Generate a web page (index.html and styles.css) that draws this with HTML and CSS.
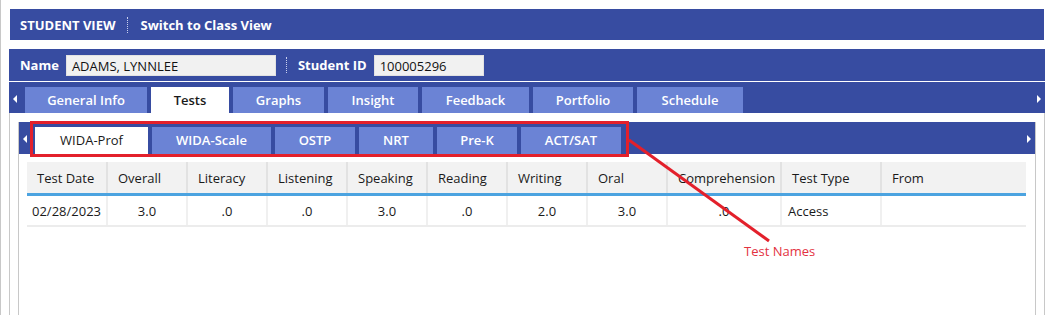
FILE: index.html
```html
<!DOCTYPE html>
<html lang="en">
<head>
  <meta charset="UTF-8">
  <title>Student View - Tests</title>
  <link rel="stylesheet" href="styles.css">
</head>
<body>
  <div class="page">
    <div class="view-bar">
      <span class="view-title">STUDENT VIEW</span>
      <span class="sep wide"></span>
      <a class="view-link">Switch to Class View</a>
    </div>

    <div class="student">
      <div class="id-bar">
        <label>Name</label>
        <div class="field name-field">ADAMS, LYNNLEE</div>
        <span class="sep"></span>
        <label>Student ID</label>
        <div class="field id-field">100005296</div>
      </div>

      <div class="tab-bar main-tabs">
        <span class="arrow left"></span>
        <div class="tabs">
          <div class="tab" style="width:122px">General Info</div>
          <div class="tab active" style="width:78px">Tests</div>
          <div class="tab" style="width:91px">Graphs</div>
          <div class="tab" style="width:90px">Insight</div>
          <div class="tab" style="width:107px">Feedback</div>
          <div class="tab" style="width:100px">Portfolio</div>
          <div class="tab" style="width:106px">Schedule</div>
        </div>
        <span class="arrow right"></span>
      </div>

      <div class="content">
        <div class="panel">
          <div class="tab-bar sub-tabs">
            <span class="arrow left"></span>
            <div class="tabs">
              <div class="tab active" style="width:113px">WIDA-Prof</div>
              <div class="tab" style="width:119px">WIDA-Scale</div>
              <div class="tab" style="width:80px">OSTP</div>
              <div class="tab" style="width:74px">NRT</div>
              <div class="tab" style="width:80px">Pre-K</div>
              <div class="tab" style="width:100px">ACT/SAT</div>
            </div>
            <span class="arrow right"></span>
          </div>

          <table class="scores">
            <colgroup>
              <col style="width:80px">
              <col style="width:80px">
              <col style="width:80px">
              <col style="width:80px">
              <col style="width:80px">
              <col style="width:80px">
              <col style="width:80px">
              <col style="width:80px">
              <col style="width:114px">
              <col style="width:100px">
              <col>
            </colgroup>
            <thead>
              <tr>
                <th>Test Date</th>
                <th>Overall</th>
                <th>Literacy</th>
                <th>Listening</th>
                <th>Speaking</th>
                <th>Reading</th>
                <th>Writing</th>
                <th>Oral</th>
                <th>Comprehension</th>
                <th>Test Type</th>
                <th>From</th>
              </tr>
            </thead>
            <tbody>
              <tr>
                <td class="num">02/28/2023</td>
                <td class="num">3.0</td>
                <td class="num">.0</td>
                <td class="num">.0</td>
                <td class="num">3.0</td>
                <td class="num">.0</td>
                <td class="num">2.0</td>
                <td class="num">3.0</td>
                <td class="num">.0</td>
                <td class="type">Access</td>
                <td></td>
              </tr>
            </tbody>
          </table>
        </div>
      </div>
    </div>

    <!-- annotation drawn over the screenshot -->
    <div class="callout-box"></div>
    <svg class="callout-line" width="1052" height="315" viewBox="0 0 1052 315">
      <line x1="628" y1="140" x2="768" y2="241" stroke="#e3202b" stroke-width="3"/>
    </svg>
    <div class="callout-label">Test Names</div>
  </div>
</body>
</html>
```

FILE: styles.css
```css
body {
  margin: 0;
  font-family: 'Open Sans', 'Noto Sans', sans-serif;
  font-size: 13px;
  color: #1a1a1a;
  background: #fff;
}
.page {
  position: relative;
  height: 315px;
  border-left: 1px solid #c8c8c8;
  padding: 9px 7px 0 8px;
  box-sizing: border-box;
  overflow: hidden;
}
.view-bar {
  margin: 0 1px;
  height: 31px;
  background: #374ca1;
  color: #fff;
  font-weight: 700;
  display: flex;
  align-items: center;
  padding-left: 10px;
}
.sep {
  width: 0;
  height: 16px;
  border-left: 1px dotted #c9d0ee;
  margin: 0 11px 0 10px;
}
.sep.wide {
  margin: 0 13px 0 11px;
}
.view-link {
  color: #fff;
  cursor: pointer;
}
.student {
  margin-top: 9px;
}
.id-bar {
  height: 32px;
  background: #374ca1;
  border-bottom: 1px solid #fff;
  display: flex;
  align-items: center;
  padding-left: 11px;
  color: #fff;
  font-weight: 700;
}
.id-bar label {
  margin-right: 7px;
}
.field {
  height: 21px;
  line-height: 21px;
  background: #f1f1f1;
  border: 1px solid #e2e2e2;
  box-sizing: border-box;
  color: #111;
  font-weight: 400;
  padding-left: 5px;
}
.name-field {
  width: 210px;
}
.id-field {
  width: 110px;
}
.tab-bar {
  background: #374ca1;
  display: flex;
  align-items: flex-end;
  position: relative;
}
.main-tabs {
  height: 31px;
}
.sub-tabs {
  height: 32px;
}
.tabs {
  display: flex;
  gap: 4px;
  margin-left: 16px;
  flex: 1;
}
.tab {
  height: 26px;
  line-height: 26px;
  background: #6b83d5;
  color: #fff;
  font-weight: 600;
  text-align: center;
}
.sub-tabs .tab {
  height: 27px;
  line-height: 26px;
}
.tab.active {
  background: #fff;
  color: #1a1a1a;
}
.sub-tabs .tab.active {
  font-weight: 500;
}
.arrow {
  position: absolute;
  top: 50%;
  margin-top: -3px;
  width: 0;
  height: 0;
  border-top: 4px solid transparent;
  border-bottom: 4px solid transparent;
}
.arrow.left {
  left: 4px;
  border-right: 4px solid #fff;
}
.arrow.right {
  right: 4px;
  border-left: 4px solid #fff;
}
.content {
  border-left: 1px solid #c8c8c8;
  border-right: 1px solid #c8c8c8;
  padding: 9px 8px 0 8px;
  height: 220px;
}
.panel {
  border-left: 1px solid #c8c8c8;
  border-right: 1px solid #c8c8c8;
  height: 100%;
}
.scores {
  margin: 8px 8px 0 8px;
  width: 999px;
  border-collapse: collapse;
  table-layout: fixed;
}
.scores th {
  height: 31px;
  background: #f2f2f2;
  font-weight: 500;
  text-align: left;
  padding: 0 0 0 10px;
  border-left: 2px solid #e2e2e2;
  border-bottom: 3px solid #4ba3e0;
  white-space: nowrap;
  overflow: hidden;
}
.scores th:first-child {
  border-left: none;
}
.scores td {
  height: 29px;
  border-left: 2px solid #f0f0f0;
  border-bottom: 2px solid #ececec;
  padding: 0;
}
.scores td:first-child {
  border-left: none;
}
.scores td.num {
  text-align: center;
}
.scores td.type {
  padding-left: 6px;
}
.callout-box {
  position: absolute;
  left: 29px;
  top: 121px;
  width: 599px;
  height: 36px;
  border: 3px solid #e3202b;
  box-sizing: border-box;
}
.callout-line {
  position: absolute;
  left: 0;
  top: 0;
}
.callout-label {
  position: absolute;
  left: 743px;
  top: 242px;
  color: #e3323f;
  font-size: 13px;
}
```
